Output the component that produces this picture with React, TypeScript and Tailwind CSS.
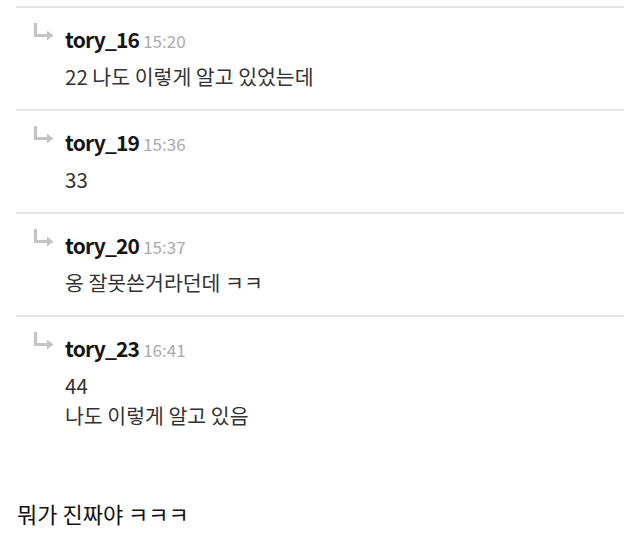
import React from "react";

const font = { fontFamily: '"Noto Sans CJK KR", "Noto Sans", sans-serif' };

const replies = [
  { name: "tory_16", time: "15:20", lines: ["22 나도 이렇게 알고 있었는데"] },
  { name: "tory_19", time: "15:36", lines: ["33"] },
  { name: "tory_20", time: "15:37", lines: ["옹 잘못쓴거라던데 ㅋㅋ"] },
  { name: "tory_23", time: "16:41", lines: ["44", "나도 이렇게 알고 있음"] },
];

function ReplyArrow() {
  return (
    <svg width="21" height="18" viewBox="0 0 21 18" className="shrink-0 -mt-[4px]" aria-hidden>
      <path d="M2.5 0 V12.5 H15" fill="none" stroke="#c4c4c4" strokeWidth="3.2" />
      <polygon points="14,7.5 20.5,12.5 14,17.5" fill="#c4c4c4" />
    </svg>
  );
}

function Reply({ name, time, lines }: { name: string; time: string; lines: string[] }) {
  return (
    <div className="border-t-2 border-[#e6e6e6] pt-[19px] pb-[18px] pl-[17px] flex gap-[11px]">
      <ReplyArrow />
      <div className="flex flex-col">
        <div className="flex items-baseline gap-[4px] h-[24px]">
          <span className="text-[21px] leading-[24px] font-bold text-[#151515] tracking-[-0.8px]">{name}</span>
          <span className="text-[17px] leading-[24px] text-[#aaaaaa]">{time}</span>
        </div>
        <div className="mt-[10px]">
          {lines.map((l, i) => (
            <p key={i} className="text-[20.5px] leading-[30px] text-[#333333]">
              {l}
            </p>
          ))}
        </div>
      </div>
    </div>
  );
}

export default function App() {
  return (
    <div className="min-h-screen bg-white pt-[6px]" style={font}>
      <div className="mx-[16px]">
        {replies.map((r) => (
          <Reply key={r.name} {...r} />
        ))}
      </div>
      <p className="mt-[50px] pl-[17px] text-[22px] leading-[30px] text-[#111111]">뭐가 진짜야 ㅋㅋㅋ</p>
    </div>
  );
}
